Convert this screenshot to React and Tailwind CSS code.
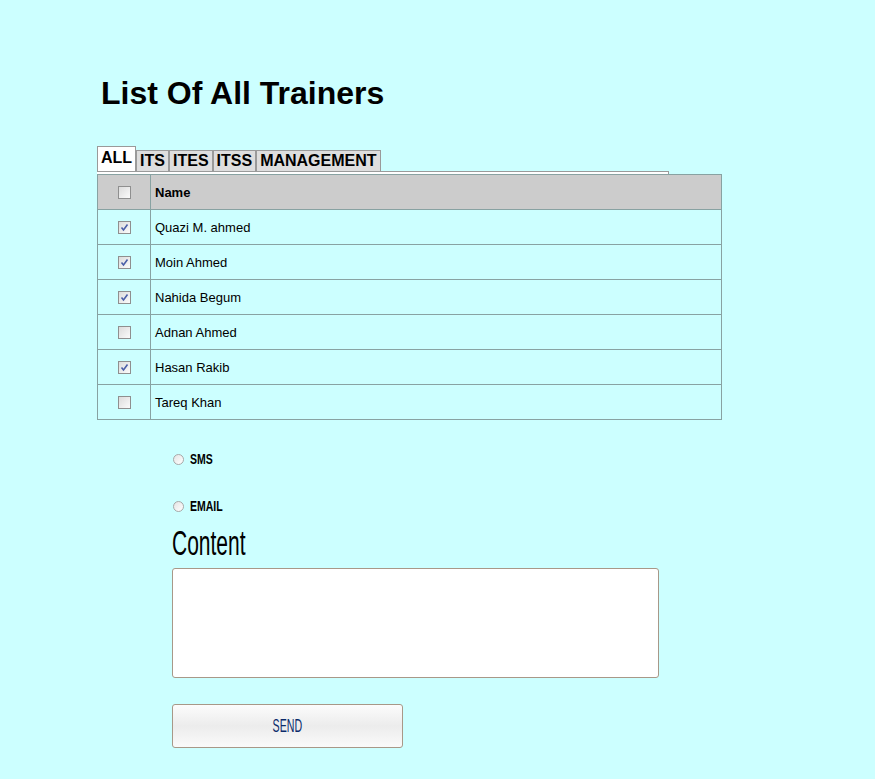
import React, { useState } from "react";

const trainers = [
  { name: "Quazi M. ahmed", checked: true },
  { name: "Moin Ahmed", checked: true },
  { name: "Nahida Begum", checked: true },
  { name: "Adnan Ahmed", checked: false },
  { name: "Hasan Rakib", checked: true },
  { name: "Tareq Khan", checked: false },
];

const tabs = ["ALL", "ITS", "ITES", "ITSS", "MANAGEMENT"];

const CheckBox = ({ checked }) => (
  <span className="inline-flex h-[13px] w-[13px] items-center justify-center border border-[#8f8f8f] bg-gradient-to-br from-[#dcdcdc] to-[#fbfbfb]">
    {checked && (
      <svg width="9" height="9" viewBox="0 0 9 9">
        <path d="M1.5 4.5 L3.5 7 L7.5 1.5" fill="none" stroke="#4a5fa8" strokeWidth="1.6" />
      </svg>
    )}
  </span>
);

const App = () => {
  const [active, setActive] = useState("ALL");
  const [mode, setMode] = useState("");

  return (
    <div className="min-h-[779px] bg-[#ccffff] pt-[73px]" style={{ fontFamily: '"Liberation Sans", Arial, sans-serif' }}>
      <div className="ml-[97px]">
        <h1 className="ml-[4px] text-[32px] font-bold leading-[40px] text-black">List Of All Trainers</h1>

        {/* Tabs */}
        <div className="mt-[33px] flex items-end">
          {tabs.map((t) => (
            <button
              key={t}
              onClick={() => setActive(t)}
              className={`border border-b-0 border-[#9a9a9a] px-[3px] text-[16px] font-bold leading-[19px] text-black ${
                active === t ? "bg-white pb-[4px] pt-[1px]" : "bg-[#dedede] pb-[1px]"
              }`}
            >
              {t}
            </button>
          ))}
        </div>
        <div className="h-[3px] w-[572px] border-t border-r border-[#9a9a9a] bg-white" />

        {/* Table */}
        <table className="w-[625px] border-collapse text-[13px] text-black">
          <thead>
            <tr className="h-[35px] bg-[#cccccc]">
              <th className="w-[53px] border border-[#88a2a2] text-center">
                <span className="flex justify-center">
                  <CheckBox checked={false} />
                </span>
              </th>
              <th className="border border-[#88a2a2] pl-[4px] pt-[2px] text-left font-bold">Name</th>
            </tr>
          </thead>
          <tbody>
            {trainers.map((tr) => (
              <tr key={tr.name} className="h-[35px]">
                <td className="border border-[#88a2a2]">
                  <span className="flex justify-center">
                    <CheckBox checked={tr.checked} />
                  </span>
                </td>
                <td className="border border-[#88a2a2] pl-[4px] pt-[2px]">{tr.name}</td>
              </tr>
            ))}
          </tbody>
        </table>

        {/* Message form */}
        <div className="ml-[75px] mt-[32px]">
          {["SMS", "EMAIL"].map((m, i) => (
            <label key={m} className={`flex items-center ${i > 0 ? "mt-[33px]" : ""}`}>
              <span
                onClick={() => setMode(m)}
                className="ml-[1px] inline-block h-[11px] w-[11px] rounded-full border border-[#a8a8a8] bg-gradient-to-br from-[#e4e4e4] to-white"
              />
              <span className="ml-[6px] inline-block origin-left scale-x-[0.7] text-[15px] font-bold leading-[14px] text-black">
                {m}
              </span>
            </label>
          ))}
          <div className="mt-[13px] h-[34px] origin-left scale-x-[0.6] text-[35px] leading-[34px] text-black">
            Content
          </div>
          <textarea className="mt-[8px] block h-[110px] w-[487px] resize-none rounded-[3px] border border-[#a89888] bg-white" />
          <button className="mt-[26px] h-[44px] w-[231px] rounded-[3px] border border-[#a89888] bg-gradient-to-b from-[#fcfcfc] via-[#ececec] to-[#fafafa] text-[#0a2a6a]">
            <span className="inline-block scale-x-[0.56] text-[19px]">SEND</span>
          </button>
        </div>
      </div>
    </div>
  );
};

export default App;
